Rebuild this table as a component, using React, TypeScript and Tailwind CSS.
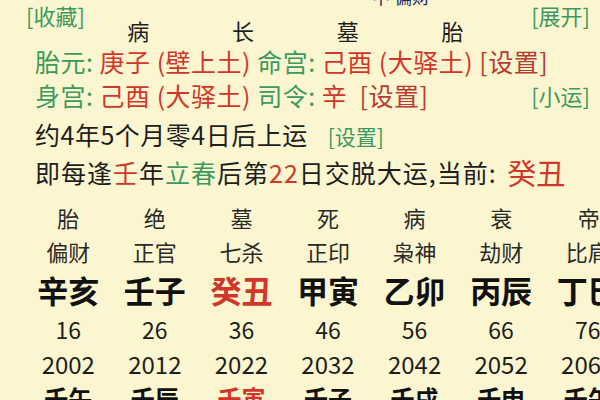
const green = "text-[#3c9a5f]";
const red = "text-[#d2362b]";

const columns = [
  { state: "胎", god: "偏财", gz: "辛亥", age: "16", year: "2002", ln: "壬午", hot: false },
  { state: "绝", god: "正官", gz: "壬子", age: "26", year: "2012", ln: "壬辰", hot: false },
  { state: "墓", god: "七杀", gz: "癸丑", age: "36", year: "2022", ln: "壬寅", hot: true },
  { state: "死", god: "正印", gz: "甲寅", age: "46", year: "2032", ln: "壬子", hot: false },
  { state: "病", god: "枭神", gz: "乙卯", age: "56", year: "2042", ln: "壬戌", hot: false },
  { state: "衰", god: "劫财", gz: "丙辰", age: "66", year: "2052", ln: "壬申", hot: false },
  { state: "帝旺", god: "比肩", gz: "丁巳", age: "76", year: "2062", ln: "壬午", hot: false },
];

export default function App() {
  return (
    <div className="h-[400px] w-[600px] overflow-hidden bg-[#fbf6d0] font-['Noto_Sans_CJK_SC',sans-serif] text-[#1e1e1e]">
      {/* top line: column headers */}
      <div className="flex h-[44px] items-start pl-[26px] pr-[10px]">
        <span className={`mt-[1px] w-[64px] shrink-0 whitespace-nowrap text-[22px] leading-[28px] ${green}`}>
          [收藏]
        </span>
        <div className="-ml-[4px] flex w-[419px] flex-col">
          <div className="h-[7px] overflow-hidden pl-[286px] text-[18px] leading-[20px] text-[#1f2a66]">
            <div className="-mt-[14px]">中 偏财</div>
          </div>
          <div className="mt-[11px] grid grid-cols-4 text-center text-[22px] leading-[24px]">
            <span>病</span>
            <span>长</span>
            <span>墓</span>
            <span>胎</span>
          </div>
        </div>
        <span className={`ml-auto mt-[1px] whitespace-nowrap text-[22px] leading-[28px] ${green}`}>[展开]</span>
      </div>

      <div className="flex h-[34px] items-center whitespace-pre pl-[35px] text-[25px] leading-[32px] tracking-[0.5px]">
        <span className={green}>胎元: </span>
        <span className={red}>庚子 (壁上土) </span>
        <span className={green}>命宫: </span>
        <span className={red}>己酉 (大驿土) </span>
        <span className="text-[#b83a30]">[设置]</span>
      </div>

      <div className="flex h-[34px] items-center whitespace-pre pl-[35px] pr-[10px] text-[25px] leading-[32px] tracking-[0.5px]">
        <span className={green}>身宫: </span>
        <span className={red}>己酉 (大驿土) </span>
        <span className={green}>司令: </span>
        <span className={red}>辛 </span>
        <span className="text-[#b83a30]"> [设置]</span>
        <span className={`ml-auto text-[22px] tracking-normal ${green}`}>[小运]</span>
      </div>

      <div className="flex h-[44px] items-center pl-[35px] text-[25px] leading-[32px] tracking-[0.5px]">
        <span>约4年5个月零4日后上运</span>
        <span className={`ml-[20px] mt-[4px] text-[21px] tracking-normal ${green}`}>[设置]</span>
      </div>

      <div className="flex h-[32px] items-center whitespace-pre pl-[35px] text-[25px] leading-[32px] tracking-[1px]">
        <span>即每逢</span>
        <span className={red}>壬</span>
        <span>年</span>
        <span className={green}>立春</span>
        <span>后第</span>
        <span className={red}>22</span>
        <span>日交脱大运,当前: </span>
        <span className={`ml-[4px] text-[29px] tracking-normal ${red}`}>癸丑</span>
      </div>

      <div className="mt-[12px] grid w-[631px] grid-cols-7 pl-[25px] text-center">
        {columns.map((c, i) => (
          <div key={c.year} className="flex flex-col items-center whitespace-nowrap">
            <span
              className={`flex h-[34px] items-center text-[22px] text-[#2a2a2a] ${i === 6 ? "pl-[24px]" : ""}`}
            >
              {c.state}
            </span>
            <span className="flex h-[34px] items-center text-[22px] text-[#2a2a2a]">{c.god}</span>
            <span className={`flex h-[44px] items-center text-[31px] font-bold ${c.hot ? red : "text-[#111]"}`}>
              {c.gz}
            </span>
            <span className="flex h-[34px] items-center text-[23px]">{c.age}</span>
            <span className="flex h-[36px] items-center text-[24px]">{c.year}</span>
            <span className={`flex h-[32px] items-center text-[24px] font-bold ${c.hot ? red : "text-[#111]"}`}>
              {c.ln}
            </span>
          </div>
        ))}
      </div>
    </div>
  );
}
